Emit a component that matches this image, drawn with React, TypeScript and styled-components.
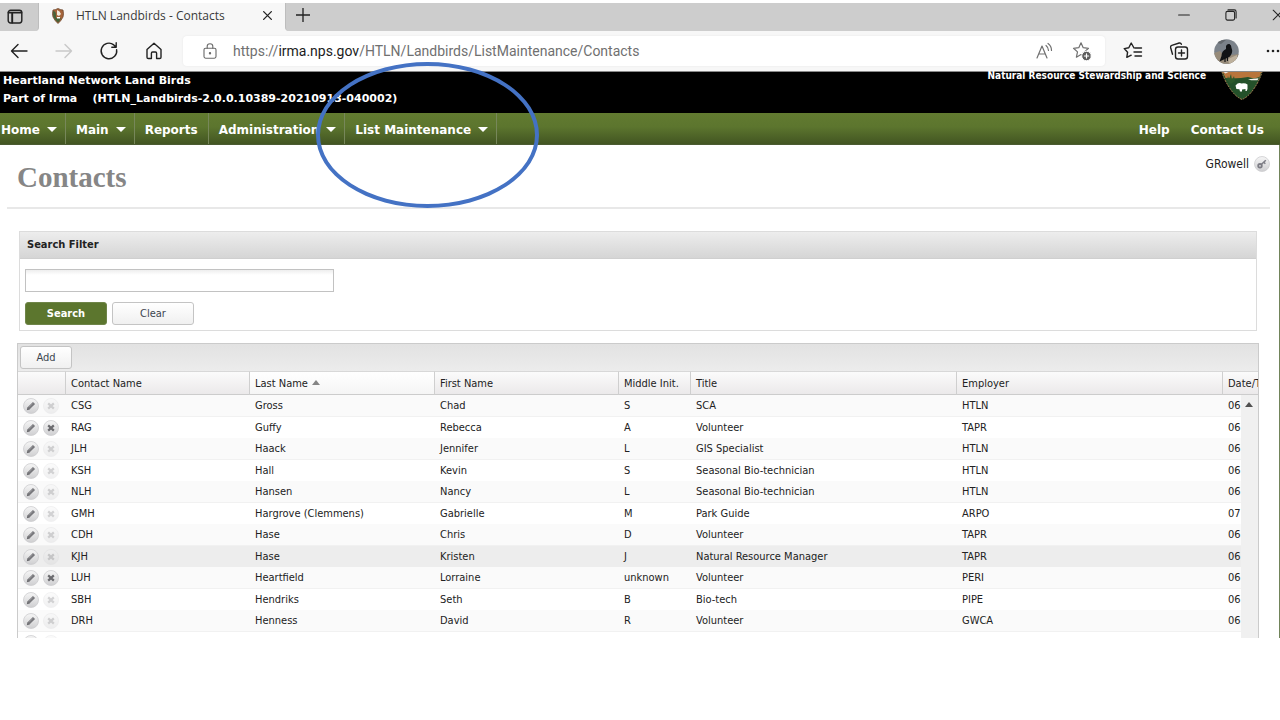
import React from "react";
import styled, { createGlobalStyle, css } from "styled-components";

const condensed = `"DejaVu Sans Condensed", "DejaVu Sans", Tahoma, sans-serif`;
const wide = `"DejaVu Sans", Verdana, sans-serif`;

const GlobalStyle = createGlobalStyle`
  * { box-sizing: border-box; }
  body { margin: 0; background: #fff; font-family: ${condensed}; font-size: 11px; color: #222; }
  button, input { font: inherit; color: inherit; }
  button { padding: 0; border: 0; background: none; cursor: pointer; }
  svg { display: block; flex: none; }
`;

const Shell = styled.div`
  position: relative;
  padding-top: 3px;
  overflow: hidden;
`;

/* Browser frame */
const TabStrip = styled.div`
  display: flex;
  height: 28px;
  background: #f7f7f7;
`;

const TabMenu = styled.button`
  width: 39px;
  padding-left: 7px;
  background: #cdcdcd;
  border-right: 1px solid #bdbdbd;
  border-bottom-right-radius: 4px;
`;

const Tab = styled.div`
  display: flex;
  align-items: center;
  width: 246px;
  padding: 0 12px 3px 13px;
  font: 12px/24px "Open Sans", "Segoe UI", sans-serif;
  color: #3a3a3a;
`;

const TabTitle = styled.span`
  flex: 1;
  padding-left: 12px;
  white-space: nowrap;
`;

const StripRest = styled.div`
  display: flex;
  flex: 1;
  min-width: 0;
  align-items: center;
  justify-content: space-between;
  padding: 0 0 4px 10px;
  background: #cdcdcd;
  border-left: 1px solid #bdbdbd;
  border-bottom-left-radius: 4px;
`;

const WindowControls = styled.div`
  display: flex;
  width: 120px;
  overflow: hidden;
`;

const CellButton = styled.button<{ $w: number }>`
  display: flex;
  flex: none;
  width: ${(p) => p.$w}px;
  justify-content: center;
  align-items: center;
`;

const Toolbar = styled.div`
  display: flex;
  align-items: center;
  height: 41px;
  background: #f7f7f7;
  border-bottom: 1px solid #8a8a8a;
`;

const NavButtons = styled.div`
  display: flex;
  gap: 23px;
  padding: 0 18px 0 8px;
`;

const Address = styled.div`
  display: flex;
  flex: 1;
  min-width: 0;
  align-items: center;
  height: 30px;
  margin-right: 5px;
  padding: 0 13px 0 19px;
  background: #fff;
  border-radius: 4px;
  box-shadow: 0 0 2px #e4e4e4;
`;

const Url = styled.span`
  flex: 1;
  min-width: 0;
  overflow: hidden;
  padding-left: 15px;
  font: 14px/20px Roboto, "Segoe UI", sans-serif;
  color: #707070;
  white-space: nowrap;
  b { font-weight: 400; color: #1c1c1c; }
`;

const AddressIcons = styled.div`
  display: flex;
  gap: 18px;
`;

const ToolbarRight = styled.div`
  display: flex;
  align-items: center;
  width: 170px;
  overflow: hidden;
`;

/* Site header */
const Banner = styled.header`
  display: flex;
  justify-content: space-between;
  height: 41px;
  padding: 0 17px 0 3px;
  background: #000;
  color: #fff;
`;

const AppName = styled.div`
  font: 700 11px/18px ${wide};
  white-space: pre;
`;

const Agency = styled.div`
  display: flex;
  gap: 15px;
  font-size: 10px;
  line-height: 8px;
  font-weight: 700;
  white-space: nowrap;
`;

const Menu = styled.nav`
  display: flex;
  height: 32px;
  background: linear-gradient(#627b30 0%, #5c752e 45%, #425522 100%);
  font: 700 12px/34px ${wide};
  border-bottom: 1px solid #4b5b31;
`;

const MenuItem = styled.a<{ $first?: boolean; $plain?: boolean }>`
  display: flex;
  gap: 7px;
  padding: 0 ${(p) => (p.$plain ? 10 : 8)}px 0 ${(p) => (p.$first ? 1 : 10)}px;
  border-right: 1px solid #77875a;
  color: #fff;
  text-decoration: none;
  white-space: nowrap;
`;

const MenuEnd = styled.div`
  display: flex;
  gap: 21px;
  margin-left: auto;
  padding-right: 16px;
  a { color: #fff; text-decoration: none; white-space: nowrap; }
`;

const Caret = styled.i`
  align-self: center;
  margin-top: 2px;
  border: 5px solid transparent;
  border-top-color: #fff;
  border-bottom-width: 0;
`;

/* Page content */
const Page = styled.main`
  border-right: 1px solid #71845a;
`;

const Heading = styled.div`
  display: flex;
  justify-content: space-between;
  height: 64px;
  margin: 0 9px 0 7px;
  padding: 10px 0 0 10px;
  border-bottom: 2px solid #e8e8e8;
  h1 { margin: 0; font: 700 29px/44px "Liberation Serif", serif; color: #868686; }
`;

const User = styled.div`
  display: flex;
  align-items: center;
  gap: 5px;
  height: 18px;
  font-size: 12px;
`;

const Panel = styled.section`
  margin: 22px 22px 12px 19px;
  border: 1px solid #dcdcdc;
  h2 {
    margin: 0;
    padding-left: 7px;
    font-size: 11px;
    line-height: 26px;
    background: linear-gradient(#ededed, #d5d5d5);
    border-bottom: 1px solid #cfcfcf;
  }
`;

const FilterForm = styled.form`
  padding: 10px 5px 5px;
`;

const FilterInput = styled.input`
  display: block;
  width: 309px;
  height: 23px;
  margin-bottom: 10px;
  padding: 0 5px;
  border: 1px solid #c2c2c2;
  background: linear-gradient(#eee, #fff 5px);
`;

const Actions = styled.div`
  display: flex;
  gap: 5px;
`;

const Button = styled.button<{ $primary?: boolean; $narrow?: boolean }>`
  width: ${(p) => (p.$narrow ? 52 : 82)}px;
  height: 23px;
  border: 1px solid #c4c4c4;
  border-radius: 3px;
  background: linear-gradient(#fff, #f0f0f0);
  color: #3d4650;
  ${(p) =>
    p.$primary &&
    css`
      border-color: #6f8549;
      background: #5c762e;
      color: #fff;
      font-weight: 700;
    `}
`;

const Grid = styled.section`
  margin: 0 20px 0 17px;
  border: 1px solid #cbcbcb;
  border-bottom: 0;
`;

const GridBar = styled.div`
  height: 27px;
  padding: 2px;
  background: linear-gradient(#e2e2e2, #ececec);
`;

const GridView = styled.div`
  position: relative;
  height: 267px;
  overflow: hidden;
`;

const Table = styled.table`
  width: 100%;
  table-layout: fixed;
  border-collapse: separate;
  border-spacing: 0;
  th, td {
    padding: 0 0 0 6px;
    overflow: hidden;
    text-align: left;
    font-weight: 400;
    white-space: nowrap;
  }
  td:first-child { padding-left: 5px; }
  th {
    height: 24px;
    padding-left: 5px;
    background: linear-gradient(#fbfbfb, #ebe9ea);
    border-top: 1px solid #d8d8d8;
    border-bottom: 1px solid #cccccc;
    border-left: 1px solid #cfcfcf;
  }
  th:first-child { border-left: 0; }
  th[aria-sort] { background: linear-gradient(#fff, #f5f5f5); }
`;

const Col = styled.col<{ $w?: number }>`
  width: ${(p) => (p.$w ? `${p.$w}px` : "auto")};
`;

const SortArrow = styled.i`
  display: inline-block;
  margin: 0 0 2px 4px;
  border: 4px solid transparent;
  border-bottom: 5px solid #858585;
  border-top-width: 0;
`;

const Row = styled.tr<{ $hover?: boolean }>`
  td { height: 21px; background: #fff; }
  &:nth-child(odd) td { height: 22px; background: #fafafa; border-bottom: 1px solid #f1f1f1; }
  ${(p) => p.$hover && css`&& td { background: #ededed; }`}
`;

const RowTools = styled.div`
  display: flex;
  gap: 4px;
`;

const Scrollbar = styled.div`
  position: absolute;
  top: 24px;
  right: 0;
  bottom: 0;
  width: 17px;
  padding: 7px 0 0 4px;
  background: #f0f0f0;
`;

const ScrollUp = styled.i`
  display: block;
  width: 8px;
  border: 4px solid transparent;
  border-bottom: 5px solid #505050;
  border-top-width: 0;
`;

const Callout = styled.div`
  position: absolute;
  top: 62px;
  left: 316px;
  width: 223px;
  height: 146px;
  border: 4px solid #4472c4;
  border-radius: 50%;
  pointer-events: none;
`;

const Line = ({ size = 20, w = 1.4, color = "#222", children }: {
  size?: number; w?: number; color?: string; children: React.ReactNode;
}) => (
  <svg width={size} height={size} viewBox="0 0 20 20" fill="none" stroke={color} strokeWidth={w} strokeLinecap="round" strokeLinejoin="round">
    {children}
  </svg>
);

const STAR = "M9 1.8 L11.2 6.7 L16.5 7.3 L12.5 10.9 L13.6 16.2 L9 13.5 L4.4 16.2 L5.5 10.9 L1.5 7.3 L6.8 6.7 Z";

const Favicon = () => (
  <svg width="12" height="16" viewBox="0 0 12 16">
    <path d="M1 2 Q3 2 6 .5 Q9 2 11 2 Q12 6 11 9 Q9 13 6 15.5 Q3 13 1 9 Q0 6 1 2Z" fill="#a5643a" stroke="#6e4930" strokeWidth=".8" />
    <path d="M5 2 Q8 3 9 6 L7 8 L5 7Z" fill="#f3eadc" />
    <path d="M1 3 Q4 3 4 7 L4 10 L9 10 Q8 13 6 14.5 Q3 12 1.4 9Z" fill="#476238" />
    <path d="M5 9h3v1.5H5z" fill="#fff" />
  </svg>
);

const Arrowhead = () => (
  <svg width="42" height="28" viewBox="0 0 42 28">
    <path d="M1 0 H41 Q38.5 9 32 18 Q27 25 21 27.5 Q15 25 10 18 Q3.5 9 1 0Z" fill="#24512a" stroke="#b0895a" strokeWidth="1" strokeDasharray="2 1" />
    <path d="M1.8 0 H40.2 L38.5 5 L33 6.5 L27 5 L20 6 L10 6.5 L4.5 6Z" fill="#b8753c" />
    <path d="M2.5 0h5l-3 1.5z" fill="#e8e4dc" />
    <path d="M6 8l1-4 1 3 2-5 1 6 2-4 1 5-4 3z" fill="#2c5a2c" />
    <path d="M27 7.2 L37.5 6.2 L36.5 8.2 L30 8.2Z" fill="#f2f2ee" />
    <path d="M14.5 13.5 q3-3.5 6-2 q3.5-1 6 1 v4.5 l-.8 2 h-1.2 v-2 l-3.5 .4 v2 h-2 l-.6-2.2 -3-.3 z" fill="#fff" />
  </svg>
);

const Avatar = () => (
  <svg width="25" height="25" viewBox="0 0 25 25">
    <defs>
      <clipPath id="avatarClip"><circle cx="12.5" cy="12.5" r="12.3" /></clipPath>
    </defs>
    <g clipPath="url(#avatarClip)">
      <rect width="25" height="25" fill="#7b828a" />
      <path d="M0 14 L6 12 L10 17 L25 15 V25 H0Z" fill="#978b7a" />
      <path d="M14 20l9-4v6l-8 3z" fill="#bdb09c" />
      <path d="M0 3l7 2 5-4H0z" fill="#62676c" />
      <path d="M12 7 Q13 4.5 15.5 5 Q17.5 6 17.5 9 Q19.5 13 16 17.5 L12 19.5 L5.5 22.5 L7.5 17 Q7.5 12 12 10Z" fill="#101215" />
      <path d="M13.5 17v5M11 18v5" stroke="#101215" strokeWidth="1.2" />
    </g>
  </svg>
);

const Disc = ({ faded, children }: { faded?: boolean; children: React.ReactNode }) => (
  <svg width="16" height="16" viewBox="0 0 16 16" opacity={faded ? 0.3 : 1}>
    <defs>
      <linearGradient id="discFill" x1="0" y1="0" x2="0" y2="1">
        <stop offset="0" stopColor="#f6f6f6" />
        <stop offset="1" stopColor="#cfcfd1" />
      </linearGradient>
    </defs>
    <circle cx="8" cy="8" r="7.5" fill="url(#discFill)" stroke="#cdcdcf" strokeWidth=".8" />
    {children}
  </svg>
);

const EditIcon = () => (
  <Disc>
    <path d="M5.2 10.8 L11 5" stroke="#77777b" strokeWidth="3" />
    <path d="M3.8 12.2 L4.5 9.5 L6.5 11.5Z" fill="#66666a" />
    <path d="M6 9.2 L9.8 5.4" stroke="#a4a4a8" strokeWidth=".7" />
  </Disc>
);

const DeleteIcon = ({ faded }: { faded?: boolean }) => (
  <Disc faded={faded}>
    <path d="M5.2 5.4 L10.8 10.6 M10.8 5.4 L5.2 10.6" stroke="#6b6b6f" strokeWidth="2.2" />
  </Disc>
);

const KeyIcon = () => (
  <Disc>
    <circle cx="6" cy="9.8" r="1.8" fill="none" stroke="#7d7d85" strokeWidth="1.8" />
    <path d="M7.5 8.3 L11.8 4.2 M9.8 6.2 l1.5 1.5" stroke="#7d7d85" strokeWidth="1.5" />
  </Disc>
);

type Contact = { cells: string[]; deletable?: boolean; hover?: boolean };

const contacts: Contact[] = [
  { cells: ["CSG", "Gross", "Chad", "S", "SCA", "HTLN", "06"] },
  { cells: ["RAG", "Guffy", "Rebecca", "A", "Volunteer", "TAPR", "06"], deletable: true },
  { cells: ["JLH", "Haack", "Jennifer", "L", "GIS Specialist", "HTLN", "06"] },
  { cells: ["KSH", "Hall", "Kevin", "S", "Seasonal Bio-technician", "HTLN", "06"] },
  { cells: ["NLH", "Hansen", "Nancy", "L", "Seasonal Bio-technician", "HTLN", "06"] },
  { cells: ["GMH", "Hargrove (Clemmens)", "Gabrielle", "M", "Park Guide", "ARPO", "07"] },
  { cells: ["CDH", "Hase", "Chris", "D", "Volunteer", "TAPR", "06"] },
  { cells: ["KJH", "Hase", "Kristen", "J", "Natural Resource Manager", "TAPR", "06"], hover: true },
  { cells: ["LUH", "Heartfield", "Lorraine", "unknown", "Volunteer", "PERI", "06"], deletable: true },
  { cells: ["SBH", "Hendriks", "Seth", "B", "Bio-tech", "PIPE", "06"] },
  { cells: ["DRH", "Henness", "David", "R", "Volunteer", "GWCA", "06"] },
  { cells: ["", "", "", "", "", "", ""] },
];

const columns = ["Contact Name", "Last Name", "First Name", "Middle Init.", "Title", "Employer", "Date/Time"];

export default function App() {
  return (
    <Shell>
      <GlobalStyle />
      <TabStrip>
        <TabMenu aria-label="Tab actions">
          <Line size={16} w={1.8}>
            <rect x="1.5" y="1.5" width="17" height="16" rx="3" />
            <path d="M2 4.5h16M6.5 6v11" strokeWidth="2.4" />
          </Line>
        </TabMenu>
        <Tab>
          <Favicon />
          <TabTitle>HTLN Landbirds - Contacts</TabTitle>
          <button aria-label="Close tab">
            <Line size={11} w={2.4}><path d="M3 3 L17 17 M17 3 L3 17" /></Line>
          </button>
        </Tab>
        <StripRest>
          <button aria-label="New tab">
            <Line size={14} w={1.9}><path d="M10 0V20M0 10H20" /></Line>
          </button>
          <WindowControls>
            <CellButton $w={47} aria-label="Minimize">
              <Line size={12} w={1.7}><path d="M1 10H19" /></Line>
            </CellButton>
            <CellButton $w={47} aria-label="Restore">
              <Line size={12} w={1.8}>
                <rect x="1.5" y="4" width="14.5" height="14.5" rx="2.5" />
                <path d="M5 1.5h10.5q3 0 3 3V15" />
              </Line>
            </CellButton>
            <CellButton $w={47} aria-label="Close window">
              <Line size={12} w={1.7}><path d="M2 2L18 18M18 2L2 18" /></Line>
            </CellButton>
          </WindowControls>
        </StripRest>
      </TabStrip>
      <Toolbar>
        <NavButtons>
          <CellButton $w={22} aria-label="Back"><Line><path d="M18 10H2.5M9 3.5L2.5 10L9 16.5" /></Line></CellButton>
          <CellButton $w={22} aria-label="Forward"><Line color="#c9c9c9"><path d="M2 10H17.5M11 3.5L17.5 10L11 16.5" /></Line></CellButton>
          <CellButton $w={22} aria-label="Refresh"><Line><path d="M17.6 8.6A7.8 7.8 0 1 1 14.8 3.9L17 6M17.2 1.8V6.2H12.8" /></Line></CellButton>
          <CellButton $w={22} aria-label="Home"><Line><path d="M3 8.6L10 2.2L17 8.6V16.2Q17 17.5 15.7 17.5H12.6V12.2Q12.6 11 11.4 11H8.6Q7.4 11 7.4 12.2V17.5H4.3Q3 17.5 3 16.2Z" /></Line></CellButton>
        </NavButtons>
        <Address>
          <Line size={16} w={1.4} color="#6b6b6b">
            <rect x="2.5" y="6.5" width="15" height="12.5" rx="2" />
            <path d="M6.5 6.5V4Q6.5 1 10 1Q13.5 1 13.5 4V6.5" />
            <circle cx="10" cy="12.8" r=".8" fill="#6b6b6b" />
          </Line>
          <Url>https://<b>irma.nps.gov</b>/HTLN/Landbirds/ListMaintenance/Contacts</Url>
          <AddressIcons>
            <CellButton $w={20} aria-label="Read aloud">
              <Line w={1.2} color="#707070"><path d="M3 17L8 5L13 17M4.8 13H11.2M12 4.5Q14.5 6.5 14.5 9.5M14 2.5Q17.5 5 17.5 9.5" /></Line>
            </CellButton>
            <CellButton $w={20} aria-label="Add to favorites">
              <Line w={1.2} color="#707070">
                <path d={STAR} />
                <circle cx="14.5" cy="15" r="4.8" fill="#5c5c5c" stroke="#fff" strokeWidth="1" />
                <path d="M14.5 12.9V17.1M12.4 15H16.6" stroke="#fff" />
              </Line>
            </CellButton>
          </AddressIcons>
        </Address>
        <ToolbarRight>
          <CellButton $w={46} aria-label="Favorites">
            <Line><path d="M11 7L8.2 2L5.8 6.8L1.2 7.6L4.6 11.2L3.8 16.4L8.2 14.2M12 7H18.5M11 11H18.5M12 15H18.5" /></Line>
          </CellButton>
          <CellButton $w={46} aria-label="Collections">
            <Line>
              <rect x="6.5" y="6" width="12" height="12" rx="2.5" />
              <path d="M12.5 9V15M9.5 12H15.5M3.5 13.2L1.6 6.5Q1.2 4.8 2.8 4.3L10.2 2Q11.8 1.6 12.4 3.3" />
            </Line>
          </CellButton>
          <CellButton $w={48} aria-label="Profile"><Avatar /></CellButton>
          <CellButton $w={46} aria-label="Settings and more">
            <svg width="14" height="4" viewBox="0 0 14 4" fill="#222">
              <circle cx="2" cy="2" r="1.3" /><circle cx="7" cy="2" r="1.3" /><circle cx="12" cy="2" r="1.3" />
            </svg>
          </CellButton>
        </ToolbarRight>
      </Toolbar>

      <Banner>
        <AppName>{"Heartland Network Land Birds\nPart of Irma    (HTLN_Landbirds-2.0.0.10389-20210913-040002)"}</AppName>
        <Agency>Natural Resource Stewardship and Science<Arrowhead /></Agency>
      </Banner>
      <Menu>
        <MenuItem href="#home" $first>Home<Caret /></MenuItem>
        <MenuItem href="#main">Main<Caret /></MenuItem>
        <MenuItem href="#reports" $plain>Reports</MenuItem>
        <MenuItem href="#administration">Administration<Caret /></MenuItem>
        <MenuItem href="#lists">List Maintenance<Caret /></MenuItem>
        <MenuEnd>
          <a href="#help">Help</a>
          <a href="#contact">Contact Us</a>
        </MenuEnd>
      </Menu>

      <Page>
        <Heading>
          <h1>Contacts</h1>
          <User>GRowell<button aria-label="Account"><KeyIcon /></button></User>
        </Heading>
        <Panel>
          <h2 id="filter-title">Search Filter</h2>
          <FilterForm onSubmit={(e) => e.preventDefault()}>
            <FilterInput type="text" aria-labelledby="filter-title" />
            <Actions>
              <Button $primary type="submit">Search</Button>
              <Button type="reset">Clear</Button>
            </Actions>
          </FilterForm>
        </Panel>
        <Grid>
          <GridBar><Button $narrow>Add</Button></GridBar>
          <GridView>
            <Table>
              <colgroup>
                <Col $w={47} /><Col $w={184} /><Col $w={185} /><Col $w={184} />
                <Col $w={72} /><Col $w={266} /><Col $w={266} /><Col />
              </colgroup>
              <thead>
                <tr>
                  <th aria-label="Actions" />
                  {columns.map((c) => (
                    <th key={c} scope="col" aria-sort={c === "Last Name" ? "ascending" : undefined}>
                      {c}{c === "Last Name" && <SortArrow />}
                    </th>
                  ))}
                </tr>
              </thead>
              <tbody>
                {contacts.map((c, i) => (
                  <Row key={i} $hover={c.hover}>
                    <td>
                      <RowTools>
                        <button aria-label="Edit"><EditIcon /></button>
                        <button aria-label="Delete" disabled={!c.deletable}><DeleteIcon faded={!c.deletable} /></button>
                      </RowTools>
                    </td>
                    {c.cells.map((v, j) => <td key={j}>{v}</td>)}
                  </Row>
                ))}
              </tbody>
            </Table>
            <Scrollbar><ScrollUp /></Scrollbar>
          </GridView>
        </Grid>
      </Page>
      <Callout />
    </Shell>
  );
}
